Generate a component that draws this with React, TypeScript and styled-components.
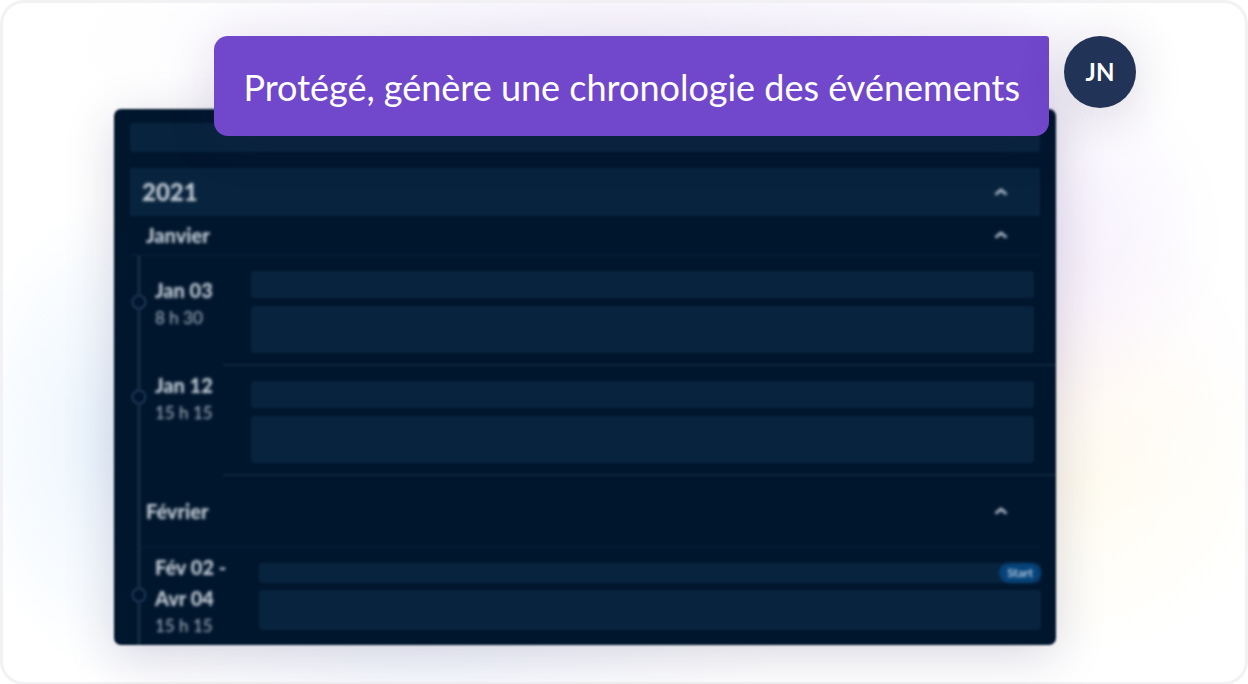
import React from "react";
import styled, { createGlobalStyle } from "styled-components";

const GlobalStyle = createGlobalStyle`
  *, *::before, *::after { box-sizing: border-box; }
  body {
    margin: 0;
    background: #fff;
    font-family: Lato, "Open Sans", sans-serif;
  }
  h2, h3, p, time { margin: 0; }
`;

const Frame = styled.main`
  min-height: 100vh;
  padding: 33px 109px 37px 111px;
  border: 3px solid #f2f2f4;
  border-radius: 24px;
  display: flex;
  flex-direction: column;
  background:
    radial-gradient(ellipse 560px 150px at 50% 6%, rgba(236, 228, 250, 0.5), rgba(236, 228, 250, 0) 100%),
    radial-gradient(ellipse 190px 190px at 83% 34%, rgba(234, 220, 250, 0.5), rgba(234, 220, 250, 0) 100%),
    radial-gradient(ellipse 220px 170px at 84% 54%, rgba(255, 240, 236, 0.35), rgba(255, 240, 236, 0) 100%),
    radial-gradient(ellipse 220px 180px at 85% 70%, rgba(255, 250, 228, 0.6), rgba(255, 250, 228, 0) 100%),
    radial-gradient(ellipse 150px 240px at 9% 64%, rgba(218, 236, 252, 0.6), rgba(218, 236, 252, 0) 100%),
    radial-gradient(ellipse 360px 100px at 34% 95%, rgba(228, 236, 252, 0.4), rgba(228, 236, 252, 0) 100%),
    #fff;
`;

const PromptRow = styled.div`
  position: relative;
  z-index: 1;
  display: flex;
  justify-content: flex-end;
  align-items: flex-start;
  gap: 15px;
`;

const Prompt = styled.p`
  padding: 27px 29px 25px;
  border-radius: 14px 3px 14px 14px;
  background: #7147cb;
  color: #fff;
  font-size: 36px;
  line-height: 48px;
  white-space: nowrap;
  box-shadow: 0 8px 50px rgba(50, 30, 100, 0.14);
`;

const Avatar = styled.div`
  width: 72px;
  height: 72px;
  flex: none;
  display: grid;
  place-items: center;
  border-radius: 50%;
  background: #223358;
  color: #fff;
  font-size: 24px;
  font-weight: 700;
  line-height: 24px;
  box-shadow: 0 8px 50px rgba(50, 30, 80, 0.18);
`;

const Panel = styled.section`
  margin: -27px 80px 0 0;
  padding-top: 14px;
  border-radius: 7px;
  overflow: hidden;
  background: #00162d;
  color: #c5ced8;
  filter: blur(1px);
  box-shadow: 0 10px 50px rgba(40, 30, 80, 0.18);
`;

const Placeholder = styled.div<{ $height: number }>`
  height: ${(p) => p.$height}px;
  border-radius: 3px;
  background: #08233d;
`;

const Summary = styled.div`
  padding: 0 16px 16px;
`;

const Toggle = styled.button`
  width: 100%;
  display: flex;
  align-items: center;
  justify-content: space-between;
  border: 0;
  background: none;
  color: inherit;
  font: inherit;
  text-align: left;
  filter: blur(1px);
`;

const YearHeading = styled.h2`
  margin: 0 16px;
  background: #08233d;
  font-size: 24px;
  font-weight: 900;
  line-height: 24px;

  ${Toggle} {
    height: 48px;
    padding: 0 32px 0 12px;
  }
`;

const MonthHeading = styled.h3<{ $height: number; $indent: number; $left: number }>`
  margin: 0 16px 0 ${(p) => p.$left}px;
  border-bottom: 2px solid #051d35;
  font-size: 20px;
  font-weight: 900;
  line-height: 24px;

  ${Toggle} {
    height: ${(p) => p.$height}px;
    padding: 0 32px 0 ${(p) => p.$indent}px;
  }
`;

const Timeline = styled.div`
  margin-left: 23px;
  border-left: 4px solid #10273f;
`;

const Entry = styled.article`
  display: flex;
  align-items: flex-start;
`;

const When = styled.div<{ $top: number }>`
  width: 82px;
  flex: none;
  margin-top: ${(p) => p.$top}px;
  display: flex;
  align-items: center;
  gap: 8px;
`;

const Node = styled.span`
  width: 16px;
  height: 16px;
  flex: none;
  margin-left: -10px;
  border: 3px solid #142d49;
  border-radius: 50%;
  background: #00162d;
`;

const Dates = styled.time`
  display: block;
  white-space: nowrap;
  filter: blur(1px);
`;

const Day = styled.strong`
  display: block;
  font-size: 20px;
  font-weight: 900;
  line-height: 31px;
`;

const Hour = styled.span`
  display: block;
  color: #a9b6c4;
  font-size: 17px;
  line-height: 23px;
`;

const Details = styled.div<{ $compact?: boolean }>`
  flex: 1;
  min-width: 0;
  display: grid;
  gap: ${(p) => (p.$compact ? 7 : 8)}px;
  padding: ${(p) => (p.$compact ? "15px 15px 15px 36px" : "15px 22px 11px 28px")};
  border-bottom: ${(p) => (p.$compact ? "0" : "2px solid #0b243d")};
`;

const TaggedRow = styled.div`
  display: flex;
  justify-content: flex-end;
  height: 20px;
  border-radius: 3px;
  background: #08233d;
`;

const Tag = styled.span`
  padding: 0 8px;
  border-radius: 10px;
  background: #06437a;
  color: #b5cde2;
  font-size: 12px;
  font-weight: 700;
  line-height: 20px;
  filter: blur(1px);
`;

const Chevron = () => (
  <svg width="14" height="10" viewBox="0 0 14 10" fill="none" aria-hidden="true">
    <path d="M1.5 7.5 7 3l5.500 4.500" stroke="#b9c5d2" strokeWidth="2.6" />
  </svg>
);

interface EventProps {
  days: string[];
  hour: string;
  top: number;
  tag?: string;
}

const Event = ({ days, hour, top, tag }: EventProps) => (
  <Entry>
    <When $top={top}>
      <Node />
      <Dates>
        {days.map((day) => (
          <Day key={day}>{day}</Day>
        ))}
        <Hour>{hour}</Hour>
      </Dates>
    </When>
    <Details $compact={Boolean(tag)}>
      {tag ? (
        <TaggedRow>
          <Tag>{tag}</Tag>
        </TaggedRow>
      ) : (
        <Placeholder $height={27} />
      )}
      <Placeholder $height={tag ? 40 : 47} />
    </Details>
  </Entry>
);

export default function App() {
  return (
    <>
      <GlobalStyle />
      <Frame>
        <PromptRow>
          <Prompt>Protégé, génère une chronologie des événements</Prompt>
          <Avatar>JN</Avatar>
        </PromptRow>
        <Panel>
          <Summary>
            <Placeholder $height={29} />
          </Summary>
          <YearHeading>
            <Toggle type="button" aria-expanded="true">
              2021
              <Chevron />
            </Toggle>
          </YearHeading>
          <MonthHeading $height={38} $indent={16} $left={16}>
            <Toggle type="button" aria-expanded="true">
              Janvier
              <Chevron />
            </Toggle>
          </MonthHeading>
          <Timeline>
            <Event days={["Jan 03"]} hour="8 h 30" top={19} />
            <Event days={["Jan 12"]} hour="15 h 15" top={4} />
            <MonthHeading $height={70} $indent={5} $left={0}>
              <Toggle type="button" aria-expanded="true">
                Février
                <Chevron />
              </Toggle>
            </MonthHeading>
            <Event days={["Fév 02 -", "Avr 04"]} hour="15 h 15" top={4} tag="Start" />
          </Timeline>
        </Panel>
      </Frame>
    </>
  );
}
